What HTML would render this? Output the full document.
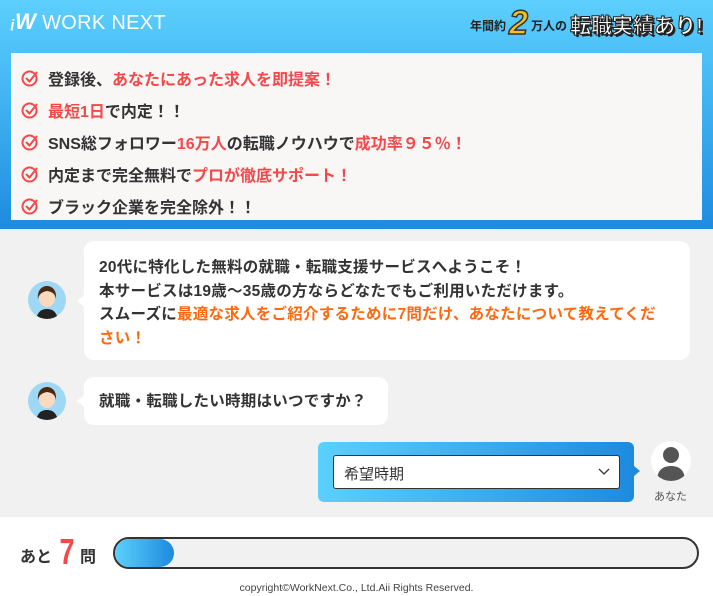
<!DOCTYPE html>
<html><head><meta charset="utf-8"><style>
*{margin:0;padding:0;box-sizing:border-box}
body{width:713px;height:596px;overflow:hidden;font-family:"Liberation Sans","Noto Sans CJK JP",sans-serif;background:#fff;color:#333;position:relative}
.hdr{position:absolute;left:0;top:0;width:713px;height:229px;background:linear-gradient(#5ccffd,#43b6f3 40%,#1e8be0)}
.logo{position:absolute;left:11px;top:9px;color:#fff;font-size:20px;letter-spacing:0.3px}
.logo b{font-style:italic;font-weight:900;font-size:22px;margin-right:6px}
.badge{position:absolute;right:10px;top:6px;font-weight:bold;color:#222;font-size:12px;display:flex;align-items:flex-end}
.badge .two{font-size:34px;color:#f6c21a;-webkit-text-stroke:1.5px #333;font-style:italic;line-height:34px;margin:0 3px}
.badge .big{font-size:21px;color:#fff;-webkit-text-stroke:1px #222;text-shadow:2px 2px 0 #222;margin-left:3px;line-height:26px}
.box{position:absolute;left:11px;top:53px;width:691px;height:167px;background:#f9f6f6;padding-top:9px}
.box div{height:32px;display:flex;align-items:center;padding-left:10px;font-size:16px;font-weight:bold}
.box svg{margin-right:9px}
.r{color:#f5484a}
.chat{position:absolute;left:0;top:229px;width:713px;height:288px;background:#f1f1f1}
.av{position:absolute;width:38px;height:38px;border-radius:50%;background:#9fd8f5;overflow:hidden}
.bub{position:absolute;background:#fff;border-radius:10px;font-size:15.5px;font-weight:bold;line-height:23.5px;padding:15px 15px;letter-spacing:0.25px}
.bub:before{content:"";position:absolute;left:-7px;top:50%;margin-top:-6px;border:6px solid transparent;border-right:7px solid #fff;border-left:0}
.o{color:#ff6a10}
.ans{position:absolute;left:318px;top:442px;width:316px;height:60px;border-radius:6px;background:linear-gradient(90deg,#5bd0fd,#1e8ade)}
.ans:after{content:"";position:absolute;right:-6px;top:24px;border:5px solid transparent;border-left:6px solid #1e8ade;border-right:0}
.sel{position:absolute;left:15px;top:13px;width:287px;height:34px;background:#fff;border:1px solid #333;border-radius:3px;font-size:15px;padding:7px 10px}
.bar{position:absolute;left:113px;top:537px;width:586px;height:32px;border:2.5px solid #333;border-radius:16px;background:#f1f1f1;overflow:hidden}
.bar i{position:absolute;left:0;top:0;width:59px;height:100%;border-radius:14px;background:linear-gradient(90deg,#5bd0fd,#1e8ade)}
</style></head><body>
<div class="hdr">
<div class="logo"><b>ᵢW</b>WORK NEXT</div>
<div class="badge"><span style="margin-bottom:6px">年間約</span><span class="two">2</span><span style="margin-bottom:6px">万人の</span><span class="big">転職実績あり!</span></div>
<div class="box">
<div><svg width="18" height="18" viewBox="0 0 18 18"><circle cx="8.5" cy="9.5" r="7" fill="none" stroke="#f5484a" stroke-width="2"/><path d="M5 9l3.5 3.5L16 3" fill="none" stroke="#f5484a" stroke-width="2"/></svg>登録後、<span class="r">あなたにあった求人を即提案！</span></div>
<div><svg width="18" height="18" viewBox="0 0 18 18"><circle cx="8.5" cy="9.5" r="7" fill="none" stroke="#f5484a" stroke-width="2"/><path d="M5 9l3.5 3.5L16 3" fill="none" stroke="#f5484a" stroke-width="2"/></svg><span class="r">最短1日</span>で内定！！</div>
<div><svg width="18" height="18" viewBox="0 0 18 18"><circle cx="8.5" cy="9.5" r="7" fill="none" stroke="#f5484a" stroke-width="2"/><path d="M5 9l3.5 3.5L16 3" fill="none" stroke="#f5484a" stroke-width="2"/></svg>SNS総フォロワー<span class="r">16万人</span>の転職ノウハウで<span class="r">成功率９５％！</span></div>
<div><svg width="18" height="18" viewBox="0 0 18 18"><circle cx="8.5" cy="9.5" r="7" fill="none" stroke="#f5484a" stroke-width="2"/><path d="M5 9l3.5 3.5L16 3" fill="none" stroke="#f5484a" stroke-width="2"/></svg>内定まで完全無料で<span class="r">プロが徹底サポート！</span></div>
<div><svg width="18" height="18" viewBox="0 0 18 18"><circle cx="8.5" cy="9.5" r="7" fill="none" stroke="#f5484a" stroke-width="2"/><path d="M5 9l3.5 3.5L16 3" fill="none" stroke="#f5484a" stroke-width="2"/></svg>ブラック企業を完全除外！！</div>
</div>
</div>
<div class="chat"></div>
<div class="av" style="left:28px;top:281px"><svg width="38" height="38" viewBox="0 0 38 38"><path d="M8 38c2-8 6-10 11-10s9 2 11 10z" fill="#222"/><ellipse cx="19" cy="17" rx="8" ry="9" fill="#fbd9bf"/><path d="M10 18c-1-10 5-13 9-13s10 3 9 13c-1-5-3-7-9-8-5 1-8 3-9 8z" fill="#4a2a14"/></svg></div>
<div class="bub" style="left:84px;top:241px;width:606px;height:119px">20代に特化した無料の就職・転職支援サービスへようこそ！<br>本サービスは19歳〜35歳の方ならどなたでもご利用いただけます。<br>スムーズに<span class="o">最適な求人をご紹介するために7問だけ、あなたについて教えてくだ<br>さい！</span></div>
<div class="av" style="left:28px;top:382px"><svg width="38" height="38" viewBox="0 0 38 38"><path d="M8 38c2-8 6-10 11-10s9 2 11 10z" fill="#222"/><ellipse cx="19" cy="17" rx="8" ry="9" fill="#fbd9bf"/><path d="M10 18c-1-10 5-13 9-13s10 3 9 13c-1-5-3-7-9-8-5 1-8 3-9 8z" fill="#4a2a14"/></svg></div>
<div class="bub" style="left:84px;top:377px;width:304px;height:48px;padding-top:13px">就職・転職したい時期はいつですか？</div>
<div class="ans"><div class="sel">希望時期<svg style="position:absolute;right:9px;top:12px" width="12" height="8" viewBox="0 0 12 8"><path d="M1 1l5 5 5-5" fill="none" stroke="#333" stroke-width="1.3"/></svg></div></div>
<div style="position:absolute;left:651px;top:441px;width:40px;height:40px;border-radius:50%;background:#fff;overflow:hidden"><svg width="40" height="40" viewBox="0 0 40 40"><circle cx="20" cy="14" r="8" fill="#555"/><path d="M6 40c0-11 6-15 14-15s14 4 14 15z" fill="#555"/></svg></div>
<div style="position:absolute;left:654px;top:488px;font-size:11px;color:#555">あなた</div>
<div style="position:absolute;left:20px;top:543px;font-size:16px;font-weight:bold">あと</div>
<div style="position:absolute;left:57px;top:532px;font-size:36px;font-weight:bold;color:#f5484a;line-height:40px;transform:scaleX(0.75)">7</div>
<div style="position:absolute;left:80px;top:543px;font-size:16px;font-weight:bold">問</div>
<div class="bar"><i></i></div>
<div style="position:absolute;left:0;width:713px;top:582px;text-align:center;font-size:10.5px;color:#444">copyright©WorkNext.Co., Ltd.Aii Rights Reserved.</div>
</body></html>
